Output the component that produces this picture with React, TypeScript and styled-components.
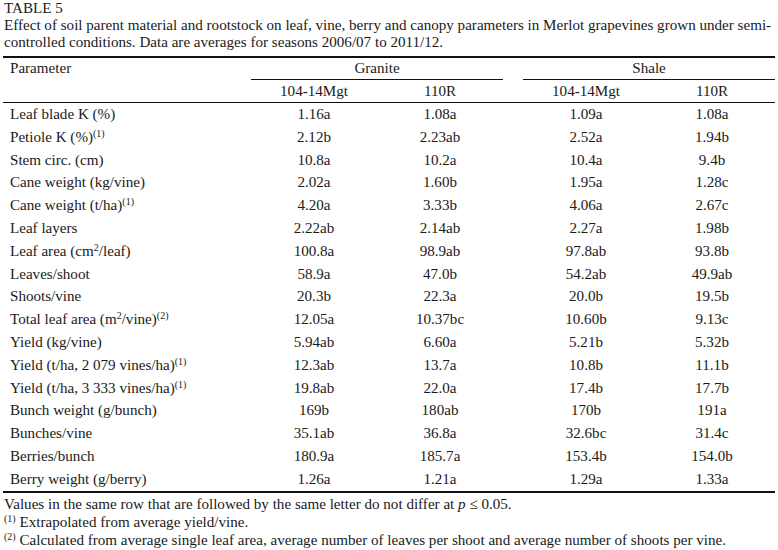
import React from 'react';
import styled, { createGlobalStyle } from 'styled-components';

const GlobalStyle = createGlobalStyle`
  html, body {
    margin: 0;
    padding: 0;
    background: #ffffff;
  }
  body {
    font-family: "Liberation Serif", "Times New Roman", serif;
    color: #1a1a1a;
  }
`;

type Row = {
  label: React.ReactNode;
  values: [string, string, string, string];
};

const Sup = styled.sup`
  font-size: 10px;
  line-height: 0;
  vertical-align: 0;
  position: relative;
  top: -5px;
`;

const rows: Row[] = [
  { label: 'Leaf blade K (%)', values: ['1.16a', '1.08a', '1.09a', '1.08a'] },
  { label: <>Petiole K (%)<Sup>(1)</Sup></>, values: ['2.12b', '2.23ab', '2.52a', '1.94b'] },
  { label: 'Stem circ. (cm)', values: ['10.8a', '10.2a', '10.4a', '9.4b'] },
  { label: 'Cane weight (kg/vine)', values: ['2.02a', '1.60b', '1.95a', '1.28c'] },
  { label: <>Cane weight (t/ha)<Sup>(1)</Sup></>, values: ['4.20a', '3.33b', '4.06a', '2.67c'] },
  { label: 'Leaf layers', values: ['2.22ab', '2.14ab', '2.27a', '1.98b'] },
  { label: <>Leaf area (cm<Sup>2</Sup>/leaf)</>, values: ['100.8a', '98.9ab', '97.8ab', '93.8b'] },
  { label: 'Leaves/shoot', values: ['58.9a', '47.0b', '54.2ab', '49.9ab'] },
  { label: 'Shoots/vine', values: ['20.3b', '22.3a', '20.0b', '19.5b'] },
  { label: <>Total leaf area (m<Sup>2</Sup>/vine)<Sup>(2)</Sup></>, values: ['12.05a', '10.37bc', '10.60b', '9.13c'] },
  { label: 'Yield (kg/vine)', values: ['5.94ab', '6.60a', '5.21b', '5.32b'] },
  { label: <>Yield (t/ha, 2 079 vines/ha)<Sup>(1)</Sup></>, values: ['12.3ab', '13.7a', '10.8b', '11.1b'] },
  { label: <>Yield (t/ha, 3 333 vines/ha)<Sup>(1)</Sup></>, values: ['19.8ab', '22.0a', '17.4b', '17.7b'] },
  { label: 'Bunch weight (g/bunch)', values: ['169b', '180ab', '170b', '191a'] },
  { label: 'Bunches/vine', values: ['35.1ab', '36.8a', '32.6bc', '31.4c'] },
  { label: 'Berries/bunch', values: ['180.9a', '185.7a', '153.4b', '154.0b'] },
  { label: 'Berry weight (g/berry)', values: ['1.26a', '1.21a', '1.29a', '1.33a'] },
];

const Page = styled.div`
  width: 772px;
  padding: 0 0 0 4px;
  font-size: 15.1px;
`;

const Title = styled.div`
  line-height: 17px;
`;

const Caption = styled.div`
  line-height: 17px;
  white-space: nowrap;
`;

const Table = styled.table`
  margin-top: 5px;
  width: 772px;
  margin-left: -1px;
  border-collapse: separate;
  border-spacing: 0;
  table-layout: fixed;
  font-size: 15.1px;
  border-top: 2px solid #111;
  border-bottom: 2px solid #111;
`;

const HeadCell = styled.th<{ $rule?: boolean; $left?: boolean }>`
  font-weight: normal;
  padding: 0;
  height: 21px;
  line-height: 21px;
  text-align: ${({ $left }) => ($left ? 'left' : 'center')};
  padding-left: ${({ $left }) => ($left ? '7px' : '0')};
  border-bottom: 1px solid ${({ $rule }) => ($rule ? '#111' : 'transparent')};
  vertical-align: middle;
`;

const SubCell = styled.th`
  font-weight: normal;
  padding: 0;
  height: 22px;
  line-height: 22px;
  text-align: center;
  border-bottom: 1px solid #111;
`;

const LabelCell = styled.td`
  padding: 0 0 0 7px;
  height: 22.8px;
  line-height: 22.8px;
  white-space: nowrap;
`;

const ValueCell = styled.td`
  padding: 0;
  height: 22.8px;
  line-height: 22.8px;
  text-align: center;
`;

const Notes = styled.div`
  margin-top: 2px;
  line-height: 18px;
`;

const App: React.FC = () => {
  return (
    <Page>
      <GlobalStyle />
      <Title>TABLE 5</Title>
      <Caption>
        Effect of soil parent material and rootstock on leaf, vine, berry and canopy parameters in Merlot grapevines grown under semi-
        <br />
        controlled conditions. Data are averages for seasons 2006/07 to 2011/12.
      </Caption>
      <Table>
        <colgroup>
          <col style={{ width: 248 }} />
          <col style={{ width: 126 }} />
          <col style={{ width: 126 }} />
          <col style={{ width: 20 }} />
          <col style={{ width: 126 }} />
          <col style={{ width: 126 }} />
        </colgroup>
        <thead>
          <tr>
            <HeadCell $left>Parameter</HeadCell>
            <HeadCell colSpan={2} $rule>Granite</HeadCell>
            <HeadCell />
            <HeadCell colSpan={2} $rule>Shale</HeadCell>
          </tr>
          <tr>
            <SubCell />
            <SubCell>104-14Mgt</SubCell>
            <SubCell>110R</SubCell>
            <SubCell />
            <SubCell>104-14Mgt</SubCell>
            <SubCell>110R</SubCell>
          </tr>
        </thead>
        <tbody>
          {rows.map((row, i) => (
            <tr key={i}>
              <LabelCell>{row.label}</LabelCell>
              <ValueCell>{row.values[0]}</ValueCell>
              <ValueCell>{row.values[1]}</ValueCell>
              <ValueCell />
              <ValueCell>{row.values[2]}</ValueCell>
              <ValueCell>{row.values[3]}</ValueCell>
            </tr>
          ))}
        </tbody>
      </Table>
      <Notes>
        Values in the same row that are followed by the same letter do not differ at <i>p</i> ≤ 0.05.
        <br />
        <Sup>(1)</Sup> Extrapolated from average yield/vine.
        <br />
        <Sup>(2)</Sup> Calculated from average single leaf area, average number of leaves per shoot and average number of shoots per vine.
      </Notes>
    </Page>
  );
};

export default App;
